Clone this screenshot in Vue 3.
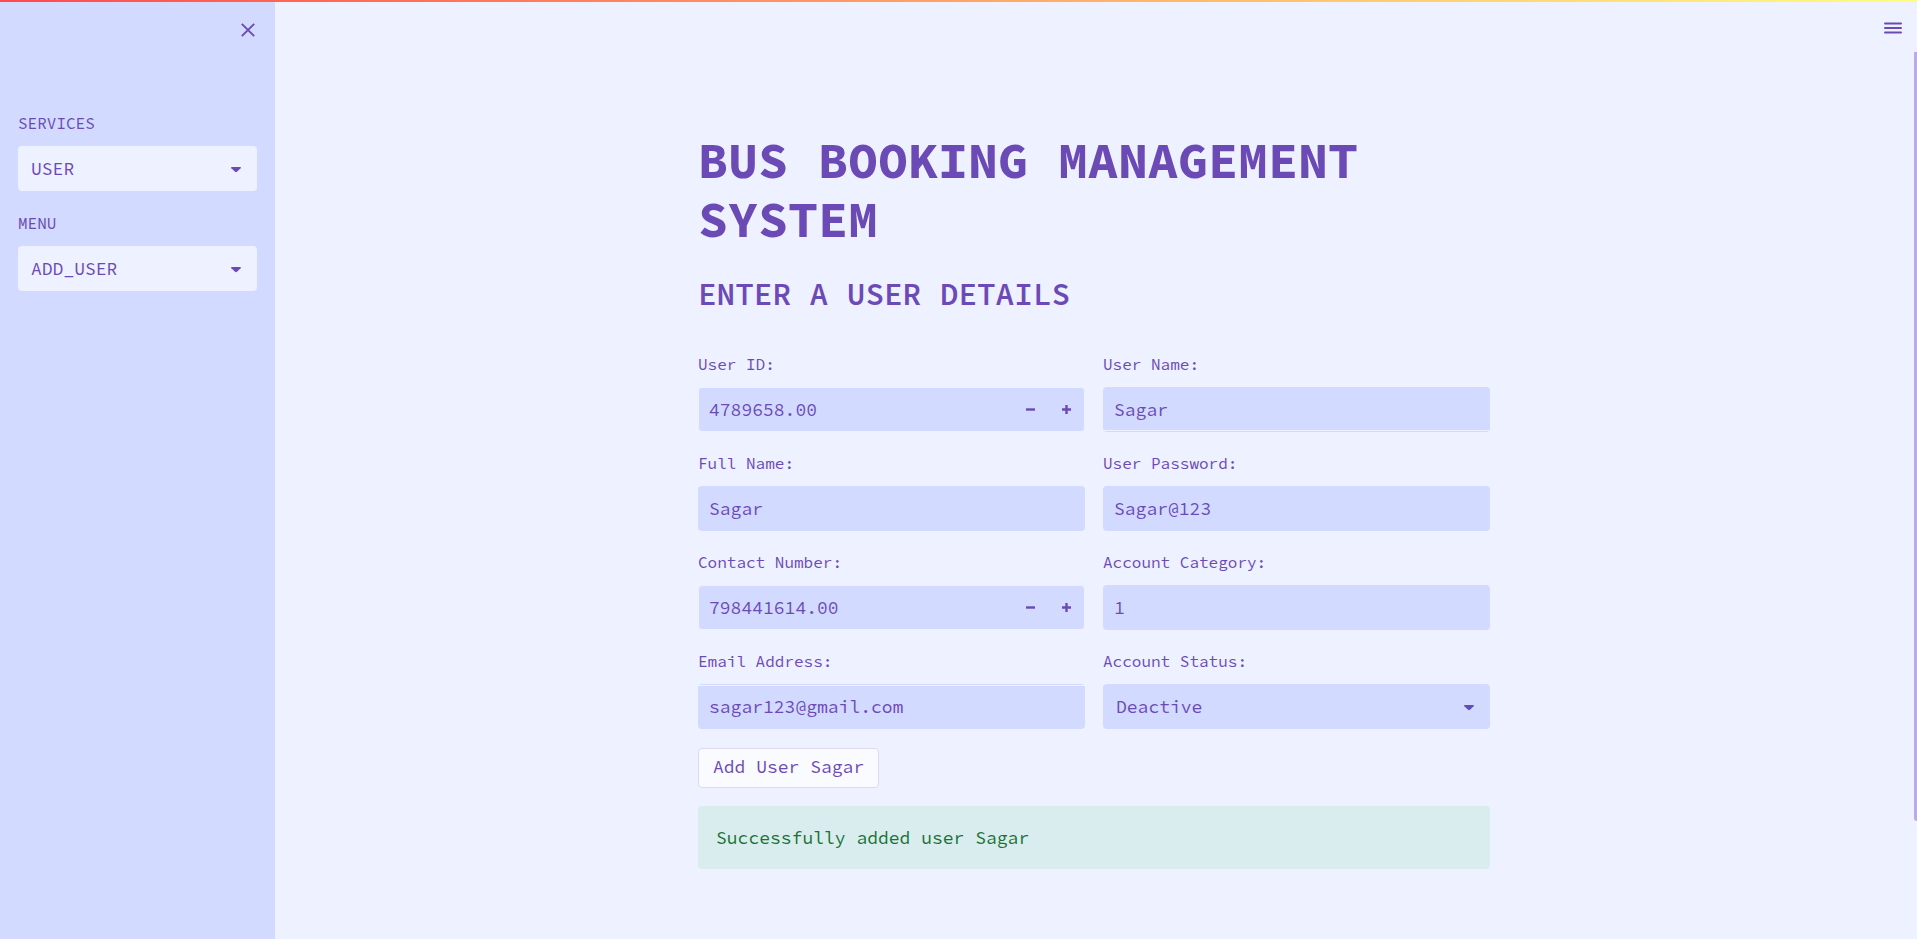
<script setup>
import { reactive, ref } from 'vue'

const service = ref('USER')
const menu = ref('ADD_USER')

const form = reactive({
  userId: '4789658.00',
  userName: 'Sagar',
  fullName: 'Sagar',
  password: 'Sagar@123',
  contact: '798441614.00',
  category: '1',
  email: 'sagar123@gmail.com',
  status: 'Deactive',
})

const fields = [
  { key: 'userId', label: 'User ID:', kind: 'number' },
  { key: 'userName', label: 'User Name:', kind: 'text', line: 'line-bottom' },
  { key: 'fullName', label: 'Full Name:', kind: 'text' },
  { key: 'password', label: 'User Password:', kind: 'text' },
  { key: 'contact', label: 'Contact Number:', kind: 'number' },
  { key: 'category', label: 'Account Category:', kind: 'text' },
  { key: 'email', label: 'Email Address:', kind: 'text', line: 'line-top' },
  { key: 'status', label: 'Account Status:', kind: 'select', options: ['Active', 'Deactive'] },
]

function step(key, amount) {
  form[key] = (Number(form[key]) + amount).toFixed(2)
}
</script>

<template>
  <div class="app">
    <div class="decoration"></div>

    <aside class="sidebar">
      <div class="sidebar-head">
        <button class="icon-button" type="button" aria-label="Close sidebar">
          <svg width="14" height="14" viewBox="0 0 14 14">
            <path d="M0.8 0.8L13.2 13.2M13.2 0.8L0.8 13.2" fill="none" stroke="currentColor" stroke-width="1.9" />
          </svg>
        </button>
      </div>
      <div class="sidebar-fields">
        <div class="field">
          <label for="service">SERVICES</label>
          <div class="control light">
            <select id="service" v-model="service">
              <option>USER</option>
              <option>BUS</option>
            </select>
            <svg class="arrow" width="10" height="6" viewBox="0 0 10 6"><path d="M0.6 0H9.4Q10.3 0.4 9.6 1.2L6 4.7Q5 5.6 4 4.7L0.4 1.2Q-0.3 0.4 0.6 0Z" fill="currentColor" /></svg>
          </div>
        </div>
        <div class="field">
          <label for="menu">MENU</label>
          <div class="control light">
            <select id="menu" v-model="menu">
              <option>ADD_USER</option>
              <option>VIEW_USER</option>
            </select>
            <svg class="arrow" width="10" height="6" viewBox="0 0 10 6"><path d="M0.6 0H9.4Q10.3 0.4 9.6 1.2L6 4.7Q5 5.6 4 4.7L0.4 1.2Q-0.3 0.4 0.6 0Z" fill="currentColor" /></svg>
          </div>
        </div>
      </div>
    </aside>

    <main class="main">
      <button class="icon-button menu-button" type="button" aria-label="Main menu">
        <svg width="18" height="14" viewBox="0 0 18 14">
          <path d="M1 2.5H17M1 7H17M1 11.5H17" fill="none" stroke="currentColor" stroke-width="2" stroke-linecap="round" />
        </svg>
      </button>

      <div class="content">
        <h1>BUS BOOKING MANAGEMENT SYSTEM</h1>
        <h2>ENTER A USER DETAILS</h2>

        <form @submit.prevent>
          <div class="grid">
            <div v-for="f in fields" :key="f.key" class="field">
              <label :for="f.key">{{ f.label }}</label>
              <div v-if="f.kind === 'number'" class="control number">
                <input :id="f.key" v-model="form[f.key]" type="text" inputmode="decimal" />
                <button type="button" class="step" aria-label="Decrease" @click="step(f.key, -1)">
                  <svg width="9" height="9" viewBox="0 0 9 9"><path d="M0 4.5H9" stroke="currentColor" stroke-width="2.4" /></svg>
                </button>
                <button type="button" class="step" aria-label="Increase" @click="step(f.key, 1)">
                  <svg width="9" height="9" viewBox="0 0 9 9"><path d="M0 4.5H9M4.5 0V9" stroke="currentColor" stroke-width="2.4" /></svg>
                </button>
              </div>
              <div v-else-if="f.kind === 'select'" class="control">
                <select :id="f.key" v-model="form[f.key]">
                  <option v-for="o in f.options" :key="o">{{ o }}</option>
                </select>
                <svg class="arrow" width="10" height="6" viewBox="0 0 10 6"><path d="M0.6 0H9.4Q10.3 0.4 9.6 1.2L6 4.7Q5 5.6 4 4.7L0.4 1.2Q-0.3 0.4 0.6 0Z" fill="currentColor" /></svg>
              </div>
              <div v-else class="control" :class="f.line">
                <input :id="f.key" v-model="form[f.key]" type="text" />
              </div>
            </div>
          </div>
          <button class="submit" type="submit">Add User Sagar</button>
        </form>

        <div class="alert" role="status">Successfully added user Sagar</div>
      </div>

      <div class="scroll-thumb"></div>
    </main>
  </div>
</template>

<style>
body {
  background: #eef1ff;
}
</style>

<style scoped>
.app {
  position: relative;
  display: flex;
  min-height: 100vh;
  overflow: hidden;
  background: #eef1ff;
  color: #6c4ab6;
  font-family: "Source Code Pro", "Liberation Mono", monospace;
  font-size: 18px;
}

.app * {
  box-sizing: border-box;
}

.decoration {
  position: absolute;
  top: 0;
  left: 0;
  right: 0;
  height: 2px;
  background: linear-gradient(90deg, #ff4b4b, #fffd80);
  z-index: 2;
}

.sidebar {
  flex: 0 0 275px;
  background: #d2daff;
}

.sidebar-head {
  display: flex;
  justify-content: flex-end;
  padding: 18px 15px 0 0;
}

.icon-button {
  display: flex;
  align-items: center;
  justify-content: center;
  width: 24px;
  height: 24px;
  padding: 0;
  border: 0;
  background: none;
  color: inherit;
}

.sidebar-fields {
  display: grid;
  gap: 21px;
  padding: 70px 18px 0;
}

.main {
  position: relative;
  flex: 1;
  min-width: 0;
  padding: 0 22px 0 18px;
}

.menu-button {
  position: absolute;
  top: 16px;
  right: 12px;
}

.content {
  max-width: 792px;
  margin: 0 auto;
  padding: 131px 0 70px;
}

h1 {
  margin: 0;
  font-size: 50px;
  line-height: 59px;
  font-weight: 700;
}

h2 {
  margin: 25px 0 39px;
  font-size: 31px;
  line-height: 40px;
  font-weight: 600;
}

.grid {
  display: grid;
  grid-template-columns: 1fr 1fr;
  gap: 20px 18px;
}

.field {
  min-width: 0;
}

label {
  display: block;
  margin-bottom: 12px;
  font-size: 16px;
  line-height: 22px;
}

.control {
  position: relative;
  display: flex;
  height: 45px;
  border-radius: 4px;
  background: #d2daff;
}

.light {
  background: #eef1ff;
}

.number {
  border: 1px solid #eef1ff;
}

.line-bottom {
  background: linear-gradient(#eef1ff, #eef1ff) 0 43px / 100% 1px no-repeat #d2daff;
}

.line-top {
  background: linear-gradient(#eef1ff, #eef1ff) 0 1px / 100% 1px no-repeat #d2daff;
}

input,
select {
  flex: 1;
  min-width: 0;
  width: 100%;
  margin: 0;
  padding: 0 11px;
  border: 0;
  outline: 0;
  background: none;
  color: inherit;
  font: inherit;
  appearance: none;
}

.number input {
  padding: 0 10px;
}

select {
  padding: 0 36px 0 13px;
}

.arrow {
  position: absolute;
  top: 21px;
  right: 16px;
  pointer-events: none;
}

.step {
  display: flex;
  align-items: center;
  justify-content: center;
  width: 36px;
  padding: 0;
  border: 0;
  background: none;
  color: inherit;
}

.submit {
  display: block;
  height: 40px;
  margin-top: 19px;
  padding: 0 14px 2px;
  border: 1px solid #dfd8f3;
  border-radius: 4px;
  background: #fafbff;
  color: inherit;
  font: inherit;
  line-height: 36px;
}

.alert {
  margin-top: 18px;
  padding: 18px;
  border-radius: 4px;
  background: #d9edee;
  color: #177233;
  line-height: 27px;
}

.scroll-thumb {
  position: absolute;
  top: 52px;
  right: 0;
  bottom: 118px;
  width: 3px;
  border-radius: 0 0 0 3px;
  background: #b8ace3;
}
</style>
